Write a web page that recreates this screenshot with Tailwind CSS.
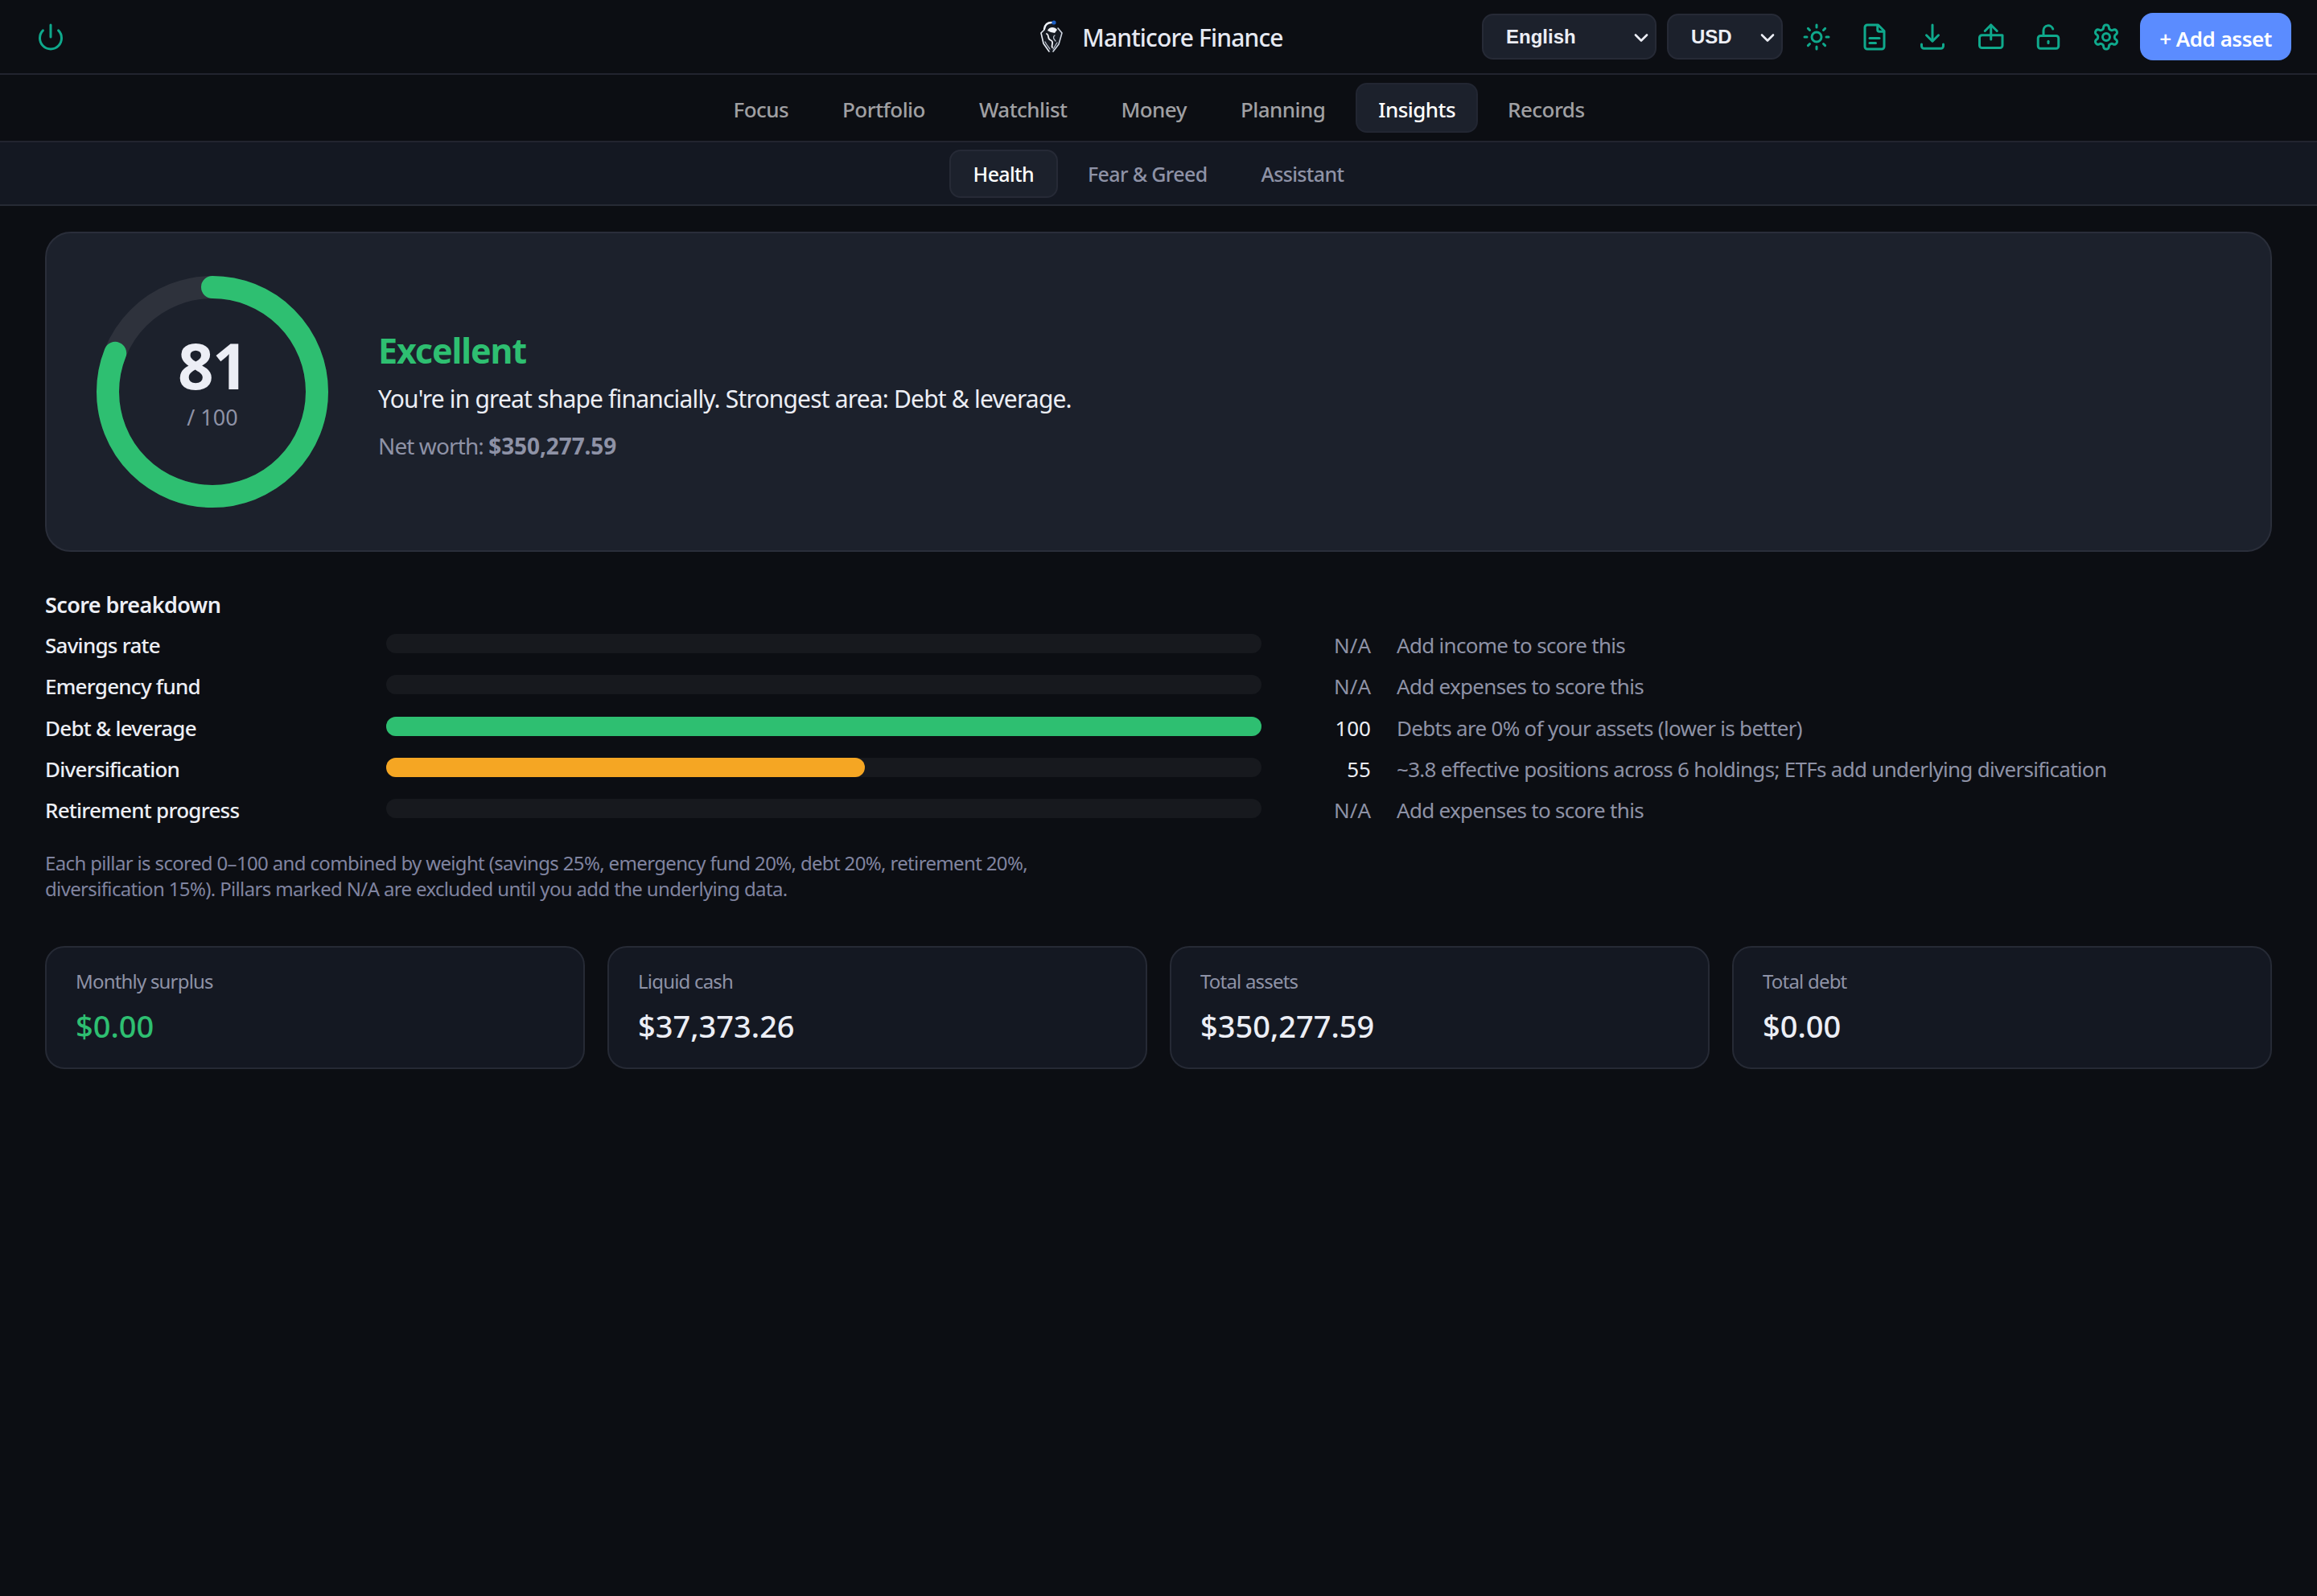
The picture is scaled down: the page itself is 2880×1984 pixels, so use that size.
<!DOCTYPE html>
<html lang="en">
<head>
    <meta charset="UTF-8">
    <meta name="viewport" content="width=device-width, initial-scale=1.0">
    <title>Manticore Finance</title>
    <script src="https://cdn.jsdelivr.net/npm/@tailwindcss/browser@4"></script>
</head>
<body class="bg-[#0c0e13] min-h-screen font-['Noto_Sans',sans-serif] text-[#eceef5]">
    <!-- top bar -->
    <header class="grid grid-cols-[1fr_auto_1fr] items-center h-[93px] pl-[45px] pr-[32px] border-b-2 border-[#22242f]">
        <button class="w-[36px] h-[36px] text-[#0fa98c]">
            <svg viewBox="0 0 24 24" class="w-[36px] h-[36px]" fill="none" stroke="currentColor" stroke-width="2" stroke-linecap="round" stroke-linejoin="round"><path d="M12 2v10"/><path d="M18.4 6.6a9 9 0 1 1-12.79 0"/></svg>
        </button>
        <div class="flex items-center gap-[23px] mr-[7px]">
            <svg viewBox="0 0 31 43" class="w-[31px] h-[43px]" fill="none" stroke-linecap="round" stroke-linejoin="round">
                <path d="M15 2 L28 17 L24 33 L15 42 L6 33 L2 17 Z" fill="#161a22"/>
                <path d="M7 13 L3 17 L6 30 L13 40" stroke="#e8edf5" stroke-width="1.6"/>
                <path d="M24 11 L29 17 L25 31 L18 40" stroke="#cfd6e2" stroke-width="1.6"/>
                <path d="M7 12 C8 6 12 4 16 4" stroke="#eef2f8" stroke-width="2.4"/>
                <circle cx="19" cy="4" r="2.6" fill="#1d5fc4"/>
                <path d="M11 14 C13 9 20 9 23 13 L20 17 L15 16 Z" fill="#f1f3f8"/>
                <path d="M10 18 C14 20 10 24 15 26 C20 28 15 32 17 35" stroke="#f1f3f8" stroke-width="1.8"/>
                <path d="M20 20 C17 22 19 25 21 27 M8 28 C10 32 12 34 14 37 M23 29 C21 32 20 34 18 37" stroke="#b9c0cc" stroke-width="1.3"/>
            </svg>
            <span class="text-[30px] leading-[40px] pt-[2px] font-medium tracking-[-0.85px] text-[#e6e9f2]">Manticore Finance</span>
        </div>
        <div class="flex items-center justify-end">
            <div class="relative w-[217px] h-[57px]">
                <select class="appearance-none w-full h-full pl-[28px] rounded-[14px] bg-[#1c212c] border-2 border-[#262a36] text-[24px] font-bold font-['Liberation_Sans',sans-serif] text-[#eceef5]"><option>English</option></select>
                <svg viewBox="0 0 18 12" class="absolute right-[10px] top-[24px] w-[18px] h-[12px]" fill="none" stroke="#eceef5" stroke-width="2.6" stroke-linecap="round" stroke-linejoin="round"><path d="M2 2.5l7 7 7-7"/></svg>
            </div>
            <div class="relative w-[144px] h-[57px] ml-[13px]">
                <select class="appearance-none w-full h-full pl-[28px] rounded-[14px] bg-[#1c212c] border-2 border-[#262a36] text-[24px] font-bold font-['Liberation_Sans',sans-serif] text-[#eceef5]"><option>USD</option></select>
                <svg viewBox="0 0 18 12" class="absolute right-[10px] top-[24px] w-[18px] h-[12px]" fill="none" stroke="#eceef5" stroke-width="2.6" stroke-linecap="round" stroke-linejoin="round"><path d="M2 2.5l7 7 7-7"/></svg>
            </div>
            <div class="flex items-center gap-[36px] mx-[24px] text-[#0fa98c]">
                <svg viewBox="0 0 24 24" class="w-[36px] h-[36px]" fill="none" stroke="currentColor" stroke-width="2" stroke-linecap="round" stroke-linejoin="round"><circle cx="12" cy="12" r="4"/><path d="M12 2v2"/><path d="M12 20v2"/><path d="m4.93 4.93 1.41 1.41"/><path d="m17.66 17.66 1.41 1.41"/><path d="M2 12h2"/><path d="M20 12h2"/><path d="m6.34 17.66-1.41 1.41"/><path d="m19.07 4.93-1.41 1.41"/></svg>
                <svg viewBox="0 0 24 24" class="w-[36px] h-[36px]" fill="none" stroke="currentColor" stroke-width="2" stroke-linecap="round" stroke-linejoin="round"><path d="M15 2H6a2 2 0 0 0-2 2v16a2 2 0 0 0 2 2h12a2 2 0 0 0 2-2V7Z"/><path d="M14.5 2.5V6a1.5 1.5 0 0 0 1.5 1.5h3.5"/><path d="M8 13h8"/><path d="M8 17h5"/></svg>
                <svg viewBox="0 0 24 24" class="w-[36px] h-[36px]" fill="none" stroke="currentColor" stroke-width="2" stroke-linecap="round" stroke-linejoin="round"><path d="M12 2v13"/><path d="m7 10.5 5 5 5-5"/><path d="M3 18v1.5a2 2 0 0 0 2 2h14a2 2 0 0 0 2-2V18"/></svg>
                <svg viewBox="0 0 24 24" class="w-[36px] h-[36px]" fill="none" stroke="currentColor" stroke-width="2" stroke-linecap="round" stroke-linejoin="round"><path d="M12.5 14V2"/><path d="m7.5 7 5-5 5 5"/><path d="M5 10.5h17V19a2 2 0 0 1-2 2H5a2 2 0 0 1-2-2v-6.500a2 2 0 0 1 2-2z"/></svg>
                <svg viewBox="0 0 24 24" class="w-[36px] h-[36px]" fill="none" stroke="currentColor" stroke-width="2" stroke-linecap="round" stroke-linejoin="round"><rect x="3.500" y="11" width="17" height="10.500" rx="2"/><path d="M8 11V6.500a4 4 0 0 1 7.800-1.200"/><path d="M12 15.500V17"/></svg>
                <svg viewBox="0 0 24 24" class="w-[36px] h-[36px]" fill="none" stroke="currentColor" stroke-width="2" stroke-linecap="round" stroke-linejoin="round"><path d="M12.22 2h-.44a2 2 0 0 0-2 2v.18a2 2 0 0 1-1 1.730l-.43.25a2 2 0 0 1-2 0l-.15-.08a2 2 0 0 0-2.730.73l-.22.38a2 2 0 0 0 .73 2.730l.15.1a2 2 0 0 1 1 1.720v.51a2 2 0 0 1-1 1.740l-.15.09a2 2 0 0 0-.73 2.730l.22.38a2 2 0 0 0 2.730.73l.15-.08a2 2 0 0 1 2 0l.43.25a2 2 0 0 1 1 1.730V20a2 2 0 0 0 2 2h.44a2 2 0 0 0 2-2v-.18a2 2 0 0 1 1-1.730l.43-.25a2 2 0 0 1 2 0l.15.08a2 2 0 0 0 2.730-.73l.22-.39a2 2 0 0 0-.73-2.730l-.15-.08a2 2 0 0 1-1-1.740v-.5a2 2 0 0 1 1-1.740l.15-.09a2 2 0 0 0 .73-2.730l-.22-.38a2 2 0 0 0-2.730-.73l-.15.08a2 2 0 0 1-2 0l-.43-.25a2 2 0 0 1-1-1.730V4a2 2 0 0 0-2-2z"/><circle cx="12" cy="12" r="3"/></svg>
            </div>
            <button class="w-[188px] h-[59px] pt-[6px] rounded-[16px] bg-[#5b8cff] text-white text-[26px] font-semibold tracking-[-0.5px]">+ Add asset</button>
        </div>
    </header>

    <!-- main tabs -->
    <nav class="flex justify-center items-center gap-[9px] h-[84px] border-b-2 border-[#22242f] text-[26px] font-medium tracking-[-0.55px] text-[#a0a0a3]">
        <a class="px-[29px] pt-[4px] leading-[58px]">Focus</a>
        <a class="px-[29px] pt-[4px] leading-[58px]">Portfolio</a>
        <a class="px-[29px] pt-[4px] leading-[58px]">Watchlist</a>
        <a class="px-[29px] pt-[4px] leading-[58px]">Money</a>
        <a class="px-[29px] pt-[4px] leading-[58px]">Planning</a>
        <a class="px-[26px] pt-[4px] leading-[54px] rounded-[14px] bg-[#1c212c] border-2 border-[#222632] text-white">Insights</a>
        <a class="px-[28px] pt-[4px] leading-[58px]">Records</a>
    </nav>

    <!-- sub tabs -->
    <nav class="flex justify-center items-center gap-[7px] h-[79px] bg-[#141822] border-b-2 border-[#262a35] text-[25px] font-medium tracking-[-0.65px] text-[#8e92a6]">
        <a class="px-[28px] leading-[56px] rounded-[14px] bg-[#1c212c] border-2 border-[#262a36] text-white">Health</a>
        <a class="px-[30px] leading-[60px]">Fear &amp; Greed</a>
        <a class="px-[30px] leading-[60px]">Assistant</a>
    </nav>

    <main class="px-[56px] pt-[32px]">
        <!-- score card -->
        <section class="flex items-center gap-[62px] h-[398px] px-[62px] rounded-[32px] bg-[#1c212c] border-2 border-[#2a2e3a]">
            <div class="relative w-[288px] h-[288px] shrink-0">
                <svg viewBox="0 0 288 288" class="w-[288px] h-[288px] -rotate-90" fill="none" stroke-width="28">
                    <circle cx="144" cy="144" r="130" stroke="#2e323c"/>
                    <circle cx="144" cy="144" r="130" stroke="#2ebf71" stroke-linecap="round" stroke-dasharray="661.600 816.800"/>
                </svg>
                <div class="absolute inset-0 flex flex-col items-center justify-center pb-[28px]">
                    <span class="text-[78px] leading-[88px] font-bold tracking-[-1.5px] text-[#eceef5]">81</span>
                    <span class="mt-[4px] text-[27px] leading-[34px] text-[#8e92a6]">/ 100</span>
                </div>
            </div>
            <div class="flex flex-col pt-[5px]">
                <h2 class="text-[43px] leading-[60px] font-bold tracking-[-1.1px] text-[#2ebf71]">Excellent</h2>
                <p class="text-[30px] leading-[42px] mt-[9px] tracking-[-0.82px] text-[#eceef5]">You're in great shape financially. Strongest area: Debt &amp; leverage.</p>
                <p class="text-[28px] leading-[40px] mt-[17px] tracking-[-0.9px] text-[#8e92a6]">Net worth: <span class="font-bold tracking-[-0.1px]">$350,277.59</span></p>
            </div>
        </section>

        <!-- breakdown -->
        <h3 class="mt-[46px] text-[27px] leading-[40px] font-semibold tracking-[-0.6px]">Score breakdown</h3>
        <div class="mt-[5px] grid grid-cols-[392px_1088px_104px_1fr] auto-rows-[51.3px] gap-x-[32px] items-center text-[26px]">
            <span class="font-medium tracking-[-0.75px]">Savings rate</span>
            <div class="h-[24px] mb-[5px] rounded-full bg-[#17191e]"></div>
            <span class="text-right text-[#8e92a6]">N/A</span>
            <span class="tracking-[-0.7px] text-[#8e92a6]">Add income to score this</span>

            <span class="font-medium tracking-[-0.75px]">Emergency fund</span>
            <div class="h-[24px] mb-[5px] rounded-full bg-[#17191e]"></div>
            <span class="text-right text-[#8e92a6]">N/A</span>
            <span class="tracking-[-0.7px] text-[#8e92a6]">Add expenses to score this</span>

            <span class="font-medium tracking-[-0.75px]">Debt &amp; leverage</span>
            <div class="h-[24px] mb-[5px] rounded-full bg-[#17191e]"><div class="h-full rounded-full bg-[#2ebf71]" style="width:100%"></div></div>
            <span class="text-right">100</span>
            <span class="tracking-[-0.7px] text-[#8e92a6]">Debts are 0% of your assets (lower is better)</span>

            <span class="font-medium tracking-[-0.75px]">Diversification</span>
            <div class="h-[24px] mb-[5px] rounded-full bg-[#17191e]"><div class="h-full rounded-full bg-[#f5a623]" style="width:54.7%"></div></div>
            <span class="text-right">55</span>
            <span class="tracking-[-0.7px] text-[#8e92a6]">~3.8 effective positions across 6 holdings; ETFs add underlying diversification</span>

            <span class="font-medium tracking-[-0.75px]">Retirement progress</span>
            <div class="h-[24px] mb-[5px] rounded-full bg-[#17191e]"></div>
            <span class="text-right text-[#8e92a6]">N/A</span>
            <span class="tracking-[-0.7px] text-[#8e92a6]">Add expenses to score this</span>
        </div>
        <p class="mt-[24px] w-[1300px] text-[24px] leading-[32px] tracking-[-0.65px] text-[#8084a0]">Each pillar is scored 0–100 and combined by weight (savings 25%, emergency fund 20%, debt 20%, retirement 20%,<br>diversification 15%). Pillars marked N/A are excluded until you add the underlying data.</p>

        <!-- stat cards -->
        <div class="mt-[55px] grid grid-cols-4 gap-[28px]">
            <div class="h-[153px] px-[36px] pt-[25px] rounded-[24px] bg-[#141822] border-2 border-[#262a35]">
                <div class="text-[24px] leading-[34px] tracking-[-0.8px] text-[#8e92a6]">Monthly surplus</div>
                <div class="mt-[13px] text-[38px] leading-[50px] font-medium text-[#2ebf71]">$0.00</div>
            </div>
            <div class="h-[153px] px-[36px] pt-[25px] rounded-[24px] bg-[#141822] border-2 border-[#262a35]">
                <div class="text-[24px] leading-[34px] tracking-[-0.8px] text-[#8e92a6]">Liquid cash</div>
                <div class="mt-[13px] text-[38px] leading-[50px] font-medium">$37,373.26</div>
            </div>
            <div class="h-[153px] px-[36px] pt-[25px] rounded-[24px] bg-[#141822] border-2 border-[#262a35]">
                <div class="text-[24px] leading-[34px] tracking-[-0.8px] text-[#8e92a6]">Total assets</div>
                <div class="mt-[13px] text-[38px] leading-[50px] font-medium">$350,277.59</div>
            </div>
            <div class="h-[153px] px-[36px] pt-[25px] rounded-[24px] bg-[#141822] border-2 border-[#262a35]">
                <div class="text-[24px] leading-[34px] tracking-[-0.8px] text-[#8e92a6]">Total debt</div>
                <div class="mt-[13px] text-[38px] leading-[50px] font-medium">$0.00</div>
            </div>
        </div>
    </main>
</body>
</html>
